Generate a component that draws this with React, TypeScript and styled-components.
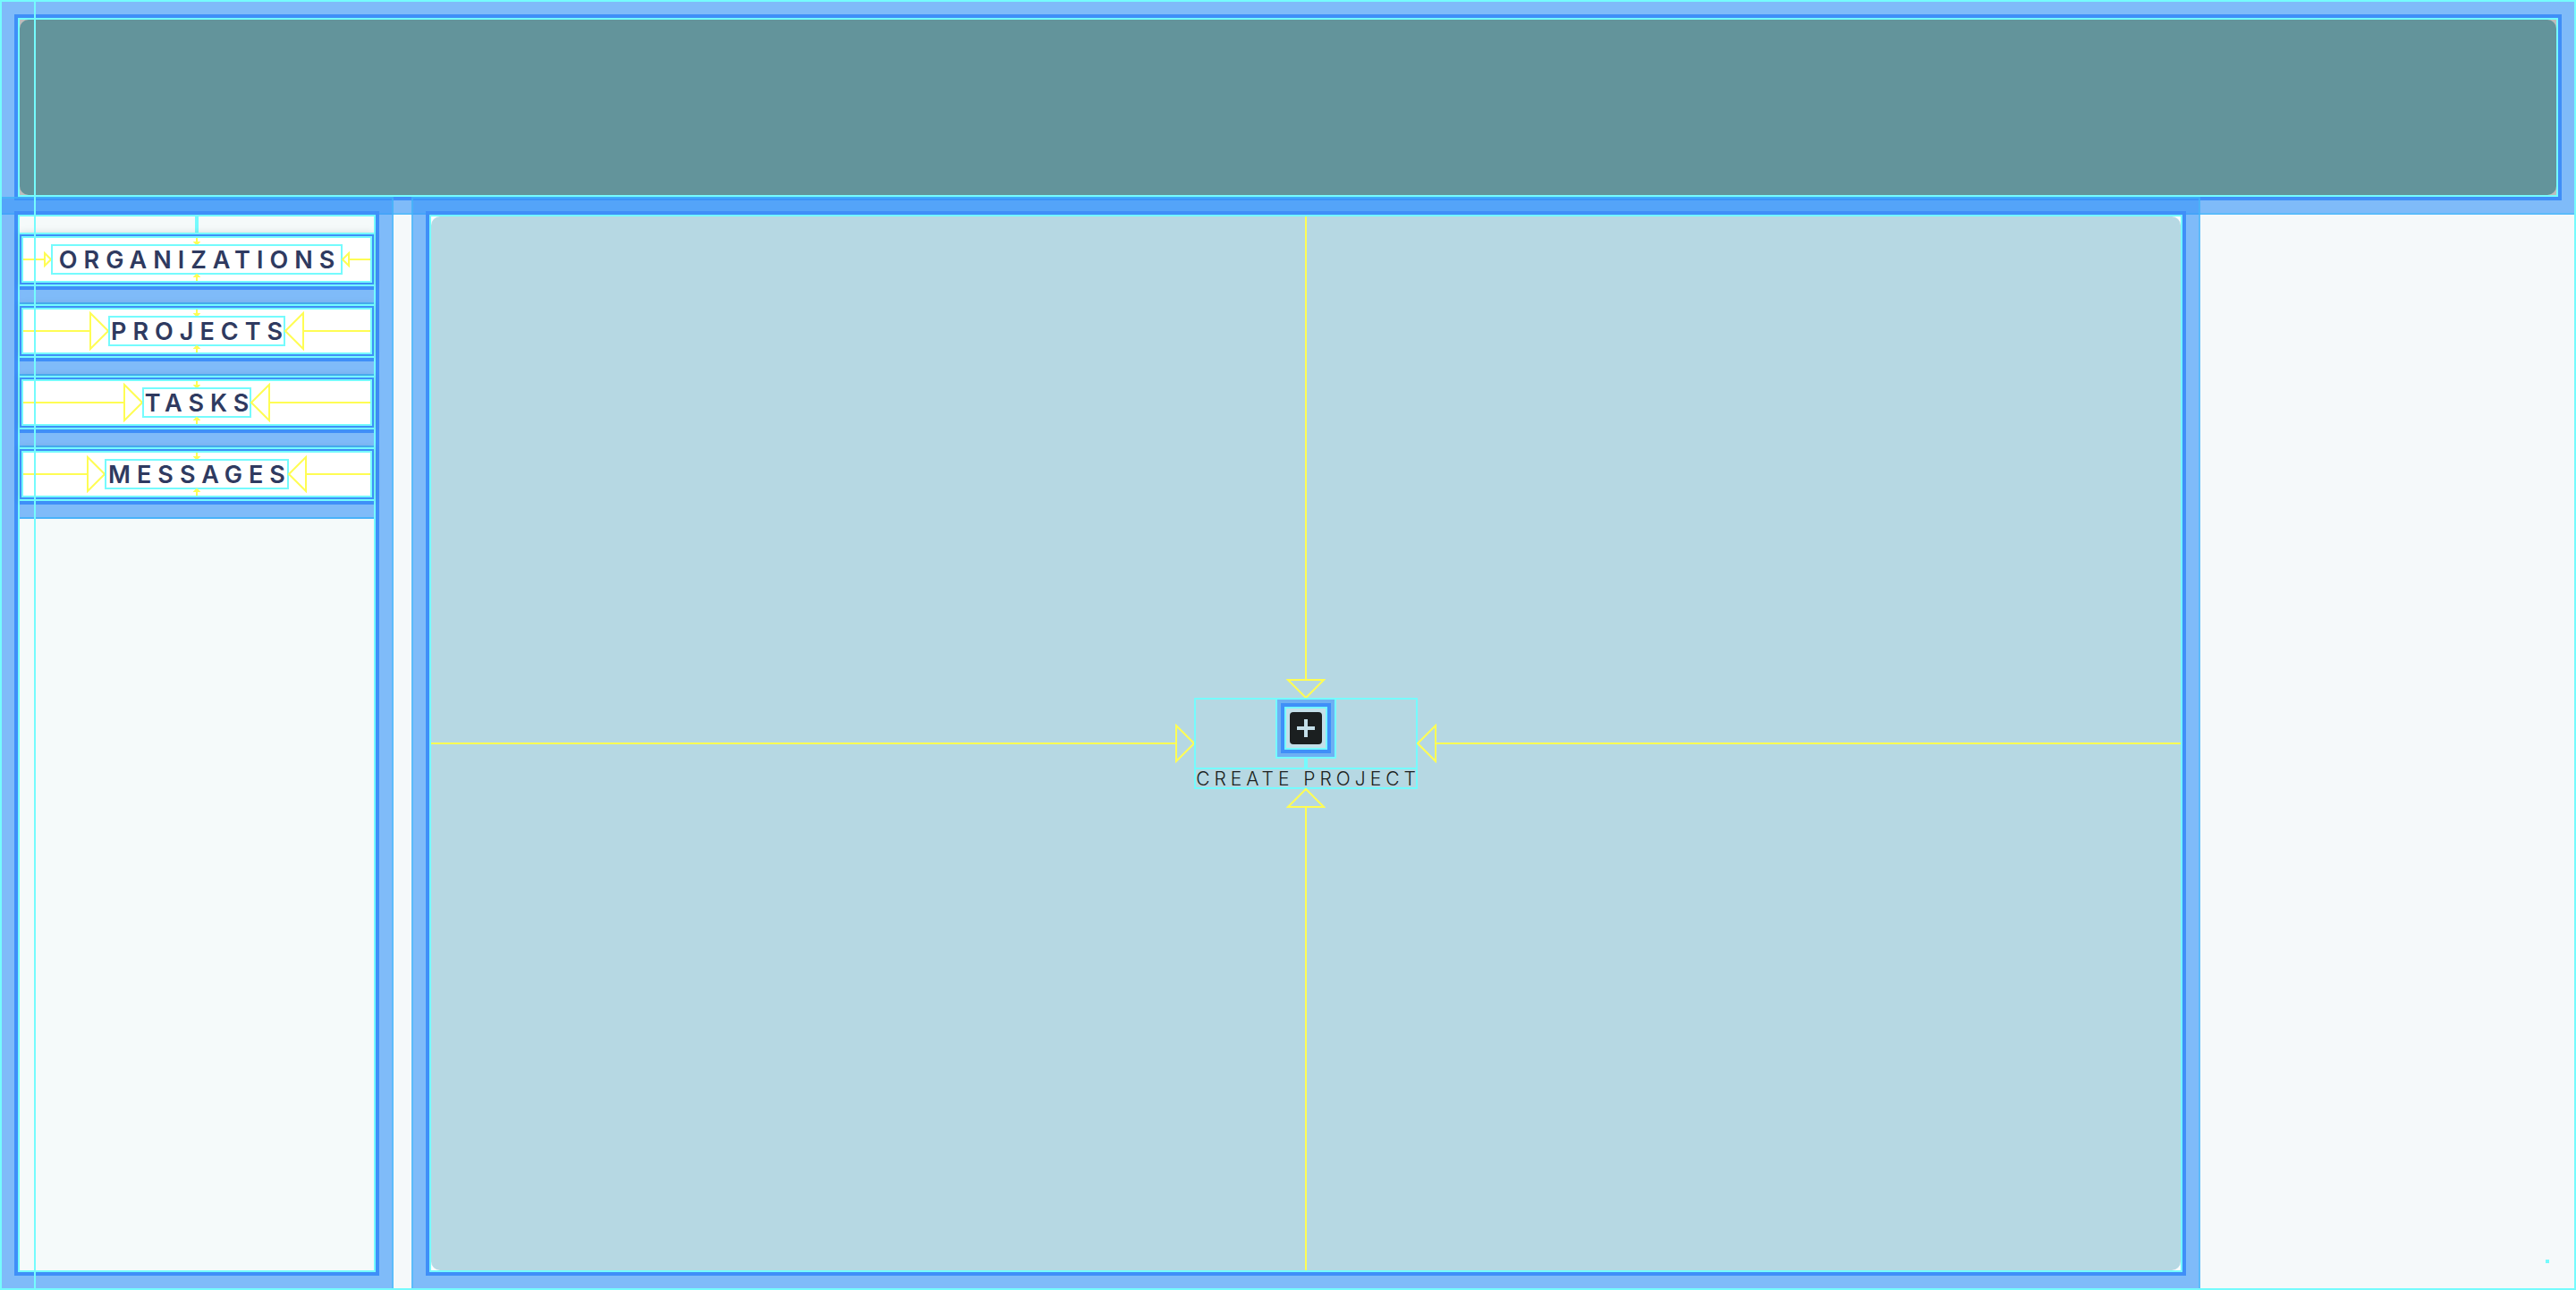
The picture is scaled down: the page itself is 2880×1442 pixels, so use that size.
import React from "react";
import styled, { createGlobalStyle, css } from "styled-components";

const color = {
  cyan: "#75fbfd",
  edge: "rgba(64, 176, 249, 0.85)",
  solid: "#3f8ff8",
  margin: "rgba(58, 150, 249, 0.63)",
  yellow: "#fffd54",
  page: "#f5f9fa",
  side: "#f5fafa",
  header: "#63949b",
  canvas: "#b6d8e3",
  navy: "#2f3a60",
  ink: "#1b1f20",
};

const GlobalStyle = createGlobalStyle`
  *, *::before, *::after { box-sizing: border-box; }
  body { margin: 0; background: ${color.page}; font-family: Inter, "Liberation Sans", sans-serif; }
  button { font: inherit; border: 0; padding: 0; margin: 0; background: none; cursor: pointer; }
`;

const Page = styled.div`
  position: relative;
  display: flex;
  flex-direction: column;
  min-height: 100vh;
  &::after {
    content: "";
    position: absolute;
    inset: 0;
    border: 2px solid ${color.cyan};
    pointer-events: none;
  }
`;

const Guide = styled.div`
  position: absolute;
  top: 0;
  bottom: 0;
  left: 38px;
  width: 2px;
  background: ${color.cyan};
  pointer-events: none;
`;

const Edge = styled.div`
  display: flex;
  flex: 1;
  border: 2px solid ${color.edge};
`;

const Margin = styled.div`
  display: flex;
  flex: 1;
  border: 14px solid ${color.margin};
`;

const Frame = styled.div<{ $bg: string }>`
  display: flex;
  flex: 1;
  border: 4px solid ${color.solid};
  background: ${(p) => p.$bg};
`;

const Inner = styled.div`
  display: flex;
  flex-direction: column;
  flex: 1;
  border: 2px solid ${color.cyan};
`;

function Framed({ bg, children }: { bg: string; children: React.ReactNode }) {
  return (
    <Edge>
      <Margin>
        <Frame $bg={bg}>
          <Inner>{children}</Inner>
        </Frame>
      </Margin>
    </Edge>
  );
}

const Header = styled.header`
  display: flex;
  height: 240px;
`;

const HeaderFill = styled.div`
  flex: 1;
  border-radius: 10px;
  background: ${color.header};
`;

const Body = styled.div`
  flex: 1;
  display: grid;
  grid-template-columns: 440px 1fr 400px;
  column-gap: 20px;
  margin-top: -20px;
`;

const Sidebar = styled.nav`
  display: flex;
`;

const Main = styled.main`
  display: flex;
`;

const Rest = styled.aside`
  display: flex;
  align-items: flex-end;
  justify-content: flex-end;
  padding: 30px;
`;

const Dot = styled.span`
  width: 4px;
  height: 4px;
  background: ${color.cyan};
`;

const Connector = styled.span<{ $size: number }>`
  display: block;
  align-self: center;
  width: 4px;
  height: ${(p) => p.$size}px;
  background: ${color.cyan};
`;

const List = styled.ul`
  list-style: none;
  margin: 0;
  padding: 0;
`;

const Item = styled.li`
  &::after {
    content: "";
    display: block;
    height: 20px;
    border-top: 4px solid ${color.solid};
    border-bottom: 2px solid ${color.edge};
    background: ${color.margin};
  }
`;

const centring = css`
  display: grid;
  grid-template-columns: 1fr auto 1fr;
  grid-template-rows: 1fr auto 1fr;
`;

const NavButton = styled.button`
  ${centring}
  width: 100%;
  height: 60px;
  padding: 4px;
  border: solid ${color.cyan};
  border-width: 2px 0;
  background: #fff;
  box-shadow: inset 0 0 0 2px ${color.solid}, inset 0 0 0 4px ${color.cyan},
    0 0 8px rgba(0, 0, 0, 0.12);
`;

const NavLabel = styled.span<{ $width: number }>`
  grid-area: 2 / 2;
  display: flex;
  justify-content: center;
  width: ${(p) => p.$width}px;
  height: 34px;
  border: 2px solid ${color.cyan};
  color: ${color.navy};
  font-size: 27px;
  font-weight: 600;
  line-height: 32px;
  letter-spacing: 7px;
  text-indent: 7px;
  white-space: nowrap;
`;

type Side = "left" | "right" | "top" | "bottom";

const place: Record<Side, ReturnType<typeof css>> = {
  left: css`grid-area: 1 / 1 / 4 / 2; flex-direction: row; margin-right: -1px;`,
  right: css`grid-area: 1 / 3 / 4 / 4; flex-direction: row-reverse; margin-left: -1px;`,
  top: css`grid-area: 1 / 2; flex-direction: column; margin-bottom: -1px;`,
  bottom: css`grid-area: 3 / 2; flex-direction: column-reverse; margin-top: -1px;`,
};

const ArrowBox = styled.span<{ $side: Side }>`
  display: flex;
  align-items: center;
  ${(p) => place[p.$side]}
  svg {
    display: block;
    flex: none;
  }
`;

const Line = styled.span<{ $upright: boolean }>`
  flex: 1;
  background: ${color.yellow};
  ${(p) => (p.$upright ? "width: 2px;" : "height: 2px;")}
`;

function Arrow({ side, depth, filled }: { side: Side; depth: number; filled?: boolean }) {
  const upright = side === "top" || side === "bottom";
  const b = depth * 2;
  const w = upright ? b : depth;
  const h = upright ? depth : b;
  const points = {
    left: `1,2 ${w - 1},${h / 2} 1,${h - 2}`,
    right: `${w - 1},2 1,${h / 2} ${w - 1},${h - 2}`,
    top: `2,1 ${w / 2},${h - 1} ${w - 2},1`,
    bottom: `2,${h - 1} ${w / 2},1 ${w - 2},${h - 1}`,
  }[side];
  return (
    <ArrowBox $side={side} aria-hidden="true">
      <Line $upright={upright} />
      <svg width={w} height={h}>
        <polygon
          points={points}
          fill={filled ? color.yellow : "none"}
          stroke={color.yellow}
          strokeWidth="2"
        />
      </svg>
    </ArrowBox>
  );
}

const Canvas = styled.div`
  ${centring}
  flex: 1;
  border-radius: 10px;
  background: ${color.canvas};
`;

const CreateButton = styled.button`
  grid-area: 2 / 2;
  display: flex;
  flex-direction: column;
  width: 250px;
  box-shadow: inset 0 0 0 2px ${color.cyan};
`;

const IconFrame = styled.span`
  align-self: center;
  display: flex;
  padding: 16px;
  background: #c4dfe9;
  box-shadow: inset 0 0 0 2px ${color.cyan}, inset 0 0 0 6px #6eb0f3,
    inset 0 0 0 10px ${color.solid}, inset 0 0 0 12px ${color.cyan};
`;

const CreateLabel = styled.span`
  display: flex;
  justify-content: center;
  height: 24px;
  border: 2px solid ${color.cyan};
  color: ${color.ink};
  font-size: 21px;
  font-weight: 300;
  line-height: 22px;
  letter-spacing: 5px;
  text-indent: 5px;
  white-space: nowrap;
`;

const items = [
  { name: "ORGANIZATIONS", width: 326, depth: 9 },
  { name: "PROJECTS", width: 198, depth: 22 },
  { name: "TASKS", width: 122, depth: 22 },
  { name: "MESSAGES", width: 206, depth: 21 },
];

export default function App() {
  return (
    <Page>
      <GlobalStyle />
      <Header>
        <Framed bg="#bdbdbd">
          <HeaderFill />
        </Framed>
      </Header>
      <Body>
        <Sidebar>
          <Framed bg={color.side}>
            <Connector $size={18} />
            <List>
              {items.map((item) => (
                <Item key={item.name}>
                  <NavButton type="button">
                    <Arrow side="left" depth={item.depth} />
                    <Arrow side="top" depth={4} filled />
                    <NavLabel $width={item.width}>{item.name}</NavLabel>
                    <Arrow side="bottom" depth={4} filled />
                    <Arrow side="right" depth={item.depth} />
                  </NavButton>
                </Item>
              ))}
            </List>
          </Framed>
        </Sidebar>
        <Main>
          <Framed bg="#fafcfd">
            <Canvas>
              <Arrow side="left" depth={22} />
              <Arrow side="top" depth={22} />
              <CreateButton type="button">
                <IconFrame>
                  <svg width="36" height="36" viewBox="0 0 36 36" aria-hidden="true">
                    <rect width="36" height="36" rx="4" fill={color.ink} />
                    <path d="M18 8v20M8 18h20" stroke="#c4dfe9" strokeWidth="4" />
                  </svg>
                </IconFrame>
                <Connector $size={10} />
                <CreateLabel>CREATE PROJECT</CreateLabel>
              </CreateButton>
              <Arrow side="bottom" depth={22} />
              <Arrow side="right" depth={22} />
            </Canvas>
          </Framed>
        </Main>
        <Rest>
          <Dot />
        </Rest>
      </Body>
      <Guide />
    </Page>
  );
}
